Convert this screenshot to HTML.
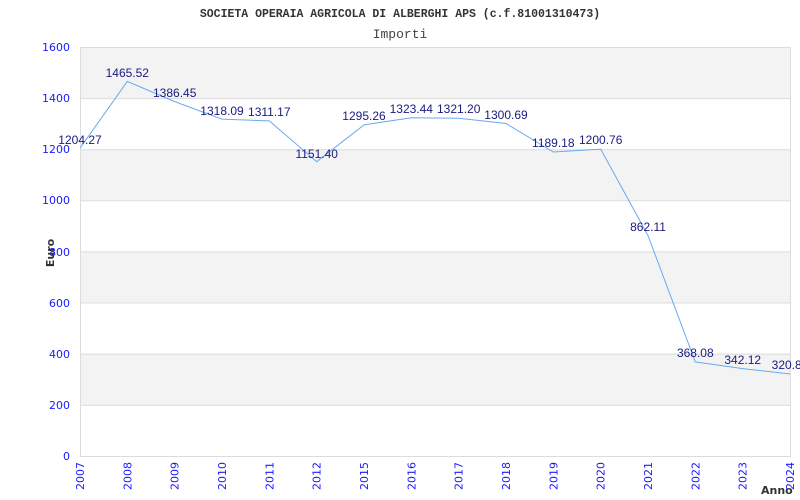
<!DOCTYPE html>
<html><head><style>body{margin:0;background:#fff}svg{display:block}</style></head><body>
<svg width="800" height="500" xmlns="http://www.w3.org/2000/svg">
<rect width="800" height="500" fill="#fff"/>
<g fill="#f3f3f3">
<rect x="80" y="47" width="710" height="51.1"/>
<rect x="80" y="149.2" width="710" height="51.1"/>
<rect x="80" y="251.5" width="710" height="51.1"/>
<rect x="80" y="353.8" width="710" height="51.1"/>
</g>
<g stroke="#dcdcdc" stroke-width="1">
<line x1="80" x2="790" y1="47.5" y2="47.5"/>
<line x1="80" x2="790" y1="98.6" y2="98.6"/>
<line x1="80" x2="790" y1="149.7" y2="149.7"/>
<line x1="80" x2="790" y1="200.8" y2="200.8"/>
<line x1="80" x2="790" y1="251.9" y2="251.9"/>
<line x1="80" x2="790" y1="303" y2="303"/>
<line x1="80" x2="790" y1="354.1" y2="354.1"/>
<line x1="80" x2="790" y1="405.2" y2="405.2"/>
<line x1="80" x2="790" y1="456.5" y2="456.5"/>
<line x1="80.5" x2="80.5" y1="47" y2="457"/>
<line x1="790.5" x2="790.5" y1="47" y2="457"/>
</g>
<text x="400" y="17" text-anchor="middle" font-family="Liberation Mono,monospace" font-weight="bold" font-size="11.5" fill="#333">SOCIETA OPERAIA AGRICOLA DI ALBERGHI APS (c.f.81001310473)</text>
<text x="400" y="38" text-anchor="middle" font-family="Liberation Mono,monospace" font-size="13" fill="#444">Importi</text>
<g font-family="DejaVu Sans,sans-serif" font-size="11" fill="#1a1aff" text-anchor="end">
<text x="70" y="51">1600</text><text x="70" y="102">1400</text><text x="70" y="153">1200</text><text x="70" y="204">1000</text><text x="70" y="256">800</text><text x="70" y="307">600</text><text x="70" y="358">400</text><text x="70" y="409">200</text><text x="70" y="460">0</text>
</g>
<text transform="translate(54,253) rotate(-90)" text-anchor="middle" font-family="DejaVu Sans,sans-serif" font-weight="bold" font-size="11" fill="#333">Euro</text>
<text x="761" y="494" font-family="DejaVu Sans,sans-serif" font-weight="bold" font-size="11" fill="#333">Anno</text>
<g font-family="DejaVu Sans,sans-serif" font-size="11" fill="#1a1aff" text-anchor="end">
<text transform="translate(84,462) rotate(-90)">2007</text>
<text transform="translate(131.3,462) rotate(-90)">2008</text>
<text transform="translate(178.7,462) rotate(-90)">2009</text>
<text transform="translate(226,462) rotate(-90)">2010</text>
<text transform="translate(273.3,462) rotate(-90)">2011</text>
<text transform="translate(320.7,462) rotate(-90)">2012</text>
<text transform="translate(368,462) rotate(-90)">2015</text>
<text transform="translate(415.3,462) rotate(-90)">2016</text>
<text transform="translate(462.7,462) rotate(-90)">2017</text>
<text transform="translate(510,462) rotate(-90)">2018</text>
<text transform="translate(557.3,462) rotate(-90)">2019</text>
<text transform="translate(604.7,462) rotate(-90)">2020</text>
<text transform="translate(652,462) rotate(-90)">2021</text>
<text transform="translate(699.3,462) rotate(-90)">2022</text>
<text transform="translate(746.7,462) rotate(-90)">2023</text>
<text transform="translate(794,462) rotate(-90)">2024</text>
</g>
<polyline fill="none" stroke="#6aaaf0" stroke-width="1" points="80,148.2 127.3,81.4 174.7,101.6 222,119.1 269.3,120.9 316.7,161.7 364,124.9 411.3,117.7 458.7,118.3 506,123.5 553.3,152 600.7,149.1 648,235.6 695.3,361.9 742.7,368.6 790,374"/>
<g font-family="Liberation Sans,sans-serif" font-size="12" fill="#1a1a80" text-anchor="middle">
<text x="80" y="144">1204.27</text>
<text x="127.3" y="77">1465.52</text>
<text x="174.7" y="97">1386.45</text>
<text x="222" y="115">1318.09</text>
<text x="269.3" y="116">1311.17</text>
<text x="316.7" y="158">1151.40</text>
<text x="364" y="120">1295.26</text>
<text x="411.3" y="113">1323.44</text>
<text x="458.7" y="113">1321.20</text>
<text x="506" y="119">1300.69</text>
<text x="553.3" y="147">1189.18</text>
<text x="600.7" y="144">1200.76</text>
<text x="648" y="231">862.11</text>
<text x="695.3" y="357">368.08</text>
<text x="742.7" y="364">342.12</text>
<text x="790" y="369">320.84</text>
</g>
</svg>
</body></html>
